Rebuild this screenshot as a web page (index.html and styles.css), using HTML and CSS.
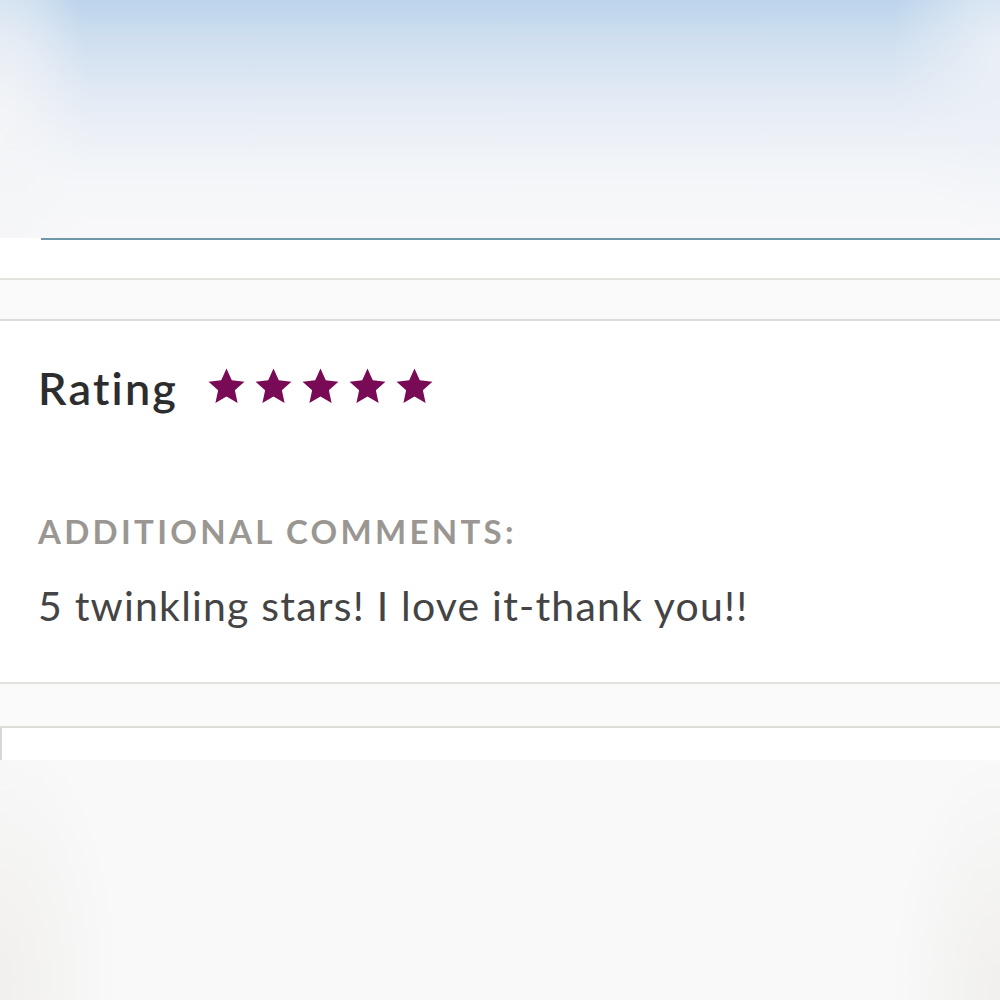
FILE: index.html
```html
<!DOCTYPE html>
<html lang="en">
<head>
<meta charset="utf-8">
<title>Review</title>
<link rel="stylesheet" href="styles.css">
</head>
<body>
<div class="page">
  <div class="hero"></div>
  <div class="hero-rule"></div>
  <div class="spacer"></div>
  <div class="band"></div>
  <section class="review">
    <div class="rating-row">
      <h2 class="rating-title">Rating</h2>
      <div class="stars" aria-label="5 stars">
        <svg class="star" viewBox="0 0 24 24"><path d="M12 1.5l3.1 6.9 7.4.8-5.6 5 1.6 7.4L12 17.8l-6.5 3.8 1.6-7.4-5.6-5 7.4-.8z"/></svg>
        <svg class="star" viewBox="0 0 24 24"><path d="M12 1.5l3.1 6.9 7.4.8-5.6 5 1.6 7.4L12 17.8l-6.5 3.8 1.6-7.4-5.6-5 7.4-.8z"/></svg>
        <svg class="star" viewBox="0 0 24 24"><path d="M12 1.5l3.1 6.9 7.4.8-5.6 5 1.6 7.4L12 17.8l-6.5 3.8 1.6-7.4-5.6-5 7.4-.8z"/></svg>
        <svg class="star" viewBox="0 0 24 24"><path d="M12 1.5l3.1 6.9 7.4.8-5.6 5 1.6 7.4L12 17.8l-6.5 3.8 1.6-7.4-5.6-5 7.4-.8z"/></svg>
        <svg class="star" viewBox="0 0 24 24"><path d="M12 1.5l3.1 6.9 7.4.8-5.6 5 1.6 7.4L12 17.8l-6.5 3.8 1.6-7.4-5.6-5 7.4-.8z"/></svg>
      </div>
    </div>
    <div class="comments-label">ADDITIONAL COMMENTS:</div>
    <p class="comment">5 twinkling stars! I love it-thank you!!</p>
  </section>
  <div class="band band-lower"></div>
  <div class="next-card"></div>
  <div class="backdrop"></div>
</div>
</body>
</html>
```
FILE: styles.css
```css
html, body {
  margin: 0;
  padding: 0;
  background: #ffffff;
}
body {
  font-family: Lato, "Open Sans", "Liberation Sans", sans-serif;
}
.page {
  width: 1000px;
  height: 1000px;
  overflow: hidden;
  display: flex;
  flex-direction: column;
}
.hero {
  height: 238px;
  flex: none;
  background:
    radial-gradient(ellipse 90px 280px at 0 140px, rgba(244,245,247,0.95), rgba(244,245,247,0) 100%),
    radial-gradient(ellipse 110px 180px at 1000px 60px, rgba(238,242,247,0.85), rgba(238,242,247,0) 100%),
    linear-gradient(to bottom, #bcd4ec 0px, #cfdff0 40px, #dde7f3 80px, #e9eef6 120px, #f1f4f8 160px, #f6f7f9 200px, #f8f8fa 238px);
}
.hero-rule {
  height: 2px;
  flex: none;
  margin-left: 41px;
  background: #6d98a9;
}
.spacer {
  height: 38px;
  flex: none;
  background: #ffffff;
}
.band {
  height: 39px;
  flex: none;
  background: #fafafa;
  border-top: 2px solid #e3e2df;
  border-bottom: 2px solid #dddcd9;
}
.band-lower {
  height: 42px;
}
.review {
  height: 361px;
  flex: none;
  box-sizing: border-box;
  padding: 42px 38px 0;
  background: #ffffff;
}
.rating-row {
  display: flex;
  align-items: center;
  gap: 28px;
}
.rating-title {
  margin: 0;
  font-size: 45px;
  font-weight: 600;
  letter-spacing: 2.2px;
  color: #2d2d2d;
  line-height: 50px;
}
.stars {
  display: flex;
  gap: 6px;
  margin-top: -4px;
}
.star {
  width: 41px;
  height: 41px;
  fill: #790a55;
}
.comments-label {
  margin-top: 98px;
  font-size: 33px;
  font-weight: 700;
  color: #9a9793;
  letter-spacing: 3.3px;
  line-height: 40px;
}
.comment {
  margin: 32px 0 0;
  font-size: 41px;
  letter-spacing: 1.2px;
  color: #444444;
  line-height: 46px;
}
.next-card {
  height: 32px;
  flex: none;
  background: #ffffff;
  border-left: 2px solid #d8d7d4;
}
.backdrop {
  flex: 1;
  background:
    radial-gradient(ellipse 120px 260px at 0 220px, rgba(238,237,235,0.8), rgba(238,237,235,0) 100%),
    radial-gradient(ellipse 110px 240px at 1000px 230px, rgba(238,237,235,0.8), rgba(238,237,235,0) 100%),
    #f9f9f9;
}
```
